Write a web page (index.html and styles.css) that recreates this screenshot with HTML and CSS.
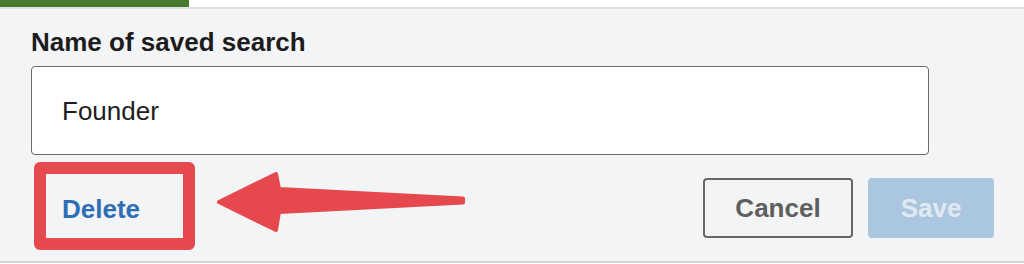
FILE: index.html
```html
<!DOCTYPE html>
<html>
<head>
<meta charset="utf-8">
<link rel="stylesheet" href="styles.css">
</head>
<body>
<div class="topbar"><div class="tab-indicator"></div></div>
<div class="panel">
  <label class="field-label" for="name">Name of saved search</label>
  <div class="input"><span class="input-value">Founder</span></div>
  <div class="actions">
    <div class="left">
      <div class="highlight"><a class="delete">Delete</a></div>
      <svg class="arrow" width="252" height="64" viewBox="0 0 252 64">
        <polygon points="4,32 61,4 64,19 248,28.5 248,32.5 64,42 61,60" fill="#e5484d" stroke="#e5484d" stroke-width="4" stroke-linejoin="round"/>
      </svg>
    </div>
    <div class="buttons">
      <button class="btn btn-cancel">Cancel</button>
      <button class="btn btn-save">Save</button>
    </div>
  </div>
</div>
</body>
</html>
```
FILE: styles.css
```css
html, body {
  margin: 0;
  padding: 0;
  background: #ffffff;
  font-family: "Liberation Sans", Arial, Helvetica, sans-serif;
}

.topbar {
  height: 7px;
  border-bottom: 2px solid #dedfe1;
  background: #ffffff;
}

.tab-indicator {
  width: 189px;
  height: 7px;
  background: #477a2c;
}

.panel {
  background: #f3f4f6;
  padding: 17px 30px 12px 31px;
  border-bottom: 2px solid #d3d4d6;
  height: 223px;
}

.field-label {
  display: block;
  font-size: 26px;
  font-weight: bold;
  line-height: 32px;
  color: #1c1c1c;
}

.input {
  margin-top: 8px;
  box-sizing: border-box;
  width: 898px;
  height: 89px;
  background: #ffffff;
  border: 1.5px solid #6b6b6b;
  border-radius: 4px;
  display: flex;
  align-items: center;
  padding-left: 30px;
}

.input-value {
  font-size: 26px;
  color: #1e1e1e;
  margin-top: 2px;
}

.actions {
  margin-top: 7px;
  display: flex;
  justify-content: space-between;
  align-items: flex-start;
}

.left {
  display: flex;
  align-items: flex-start;
}

.highlight {
  margin-left: 3px;
  width: 137px;
  height: 64px;
  border: 12px solid #e5484d;
  border-radius: 6px;
  display: flex;
  align-items: center;
}

.delete {
  padding-left: 16px;
  padding-top: 6px;
  font-size: 26px;
  font-weight: bold;
  color: #2f6eb5;
}

.arrow {
  display: block;
  margin-left: 20px;
  margin-top: 8px;
}

.buttons {
  display: flex;
  gap: 15px;
  margin-top: 16px;
}

.btn {
  font-family: "Liberation Sans", Arial, Helvetica, sans-serif;
  font-size: 26px;
  font-weight: bold;
  height: 60px;
  border-radius: 4px;
  padding: 0;
  margin: 0;
}

.btn-cancel {
  width: 150px;
  background: transparent;
  border: 2px solid #676767;
  color: #5f5f5f;
}

.btn-save {
  width: 126px;
  background: #abc7df;
  border: none;
  color: #e1e9f1;
}
```
